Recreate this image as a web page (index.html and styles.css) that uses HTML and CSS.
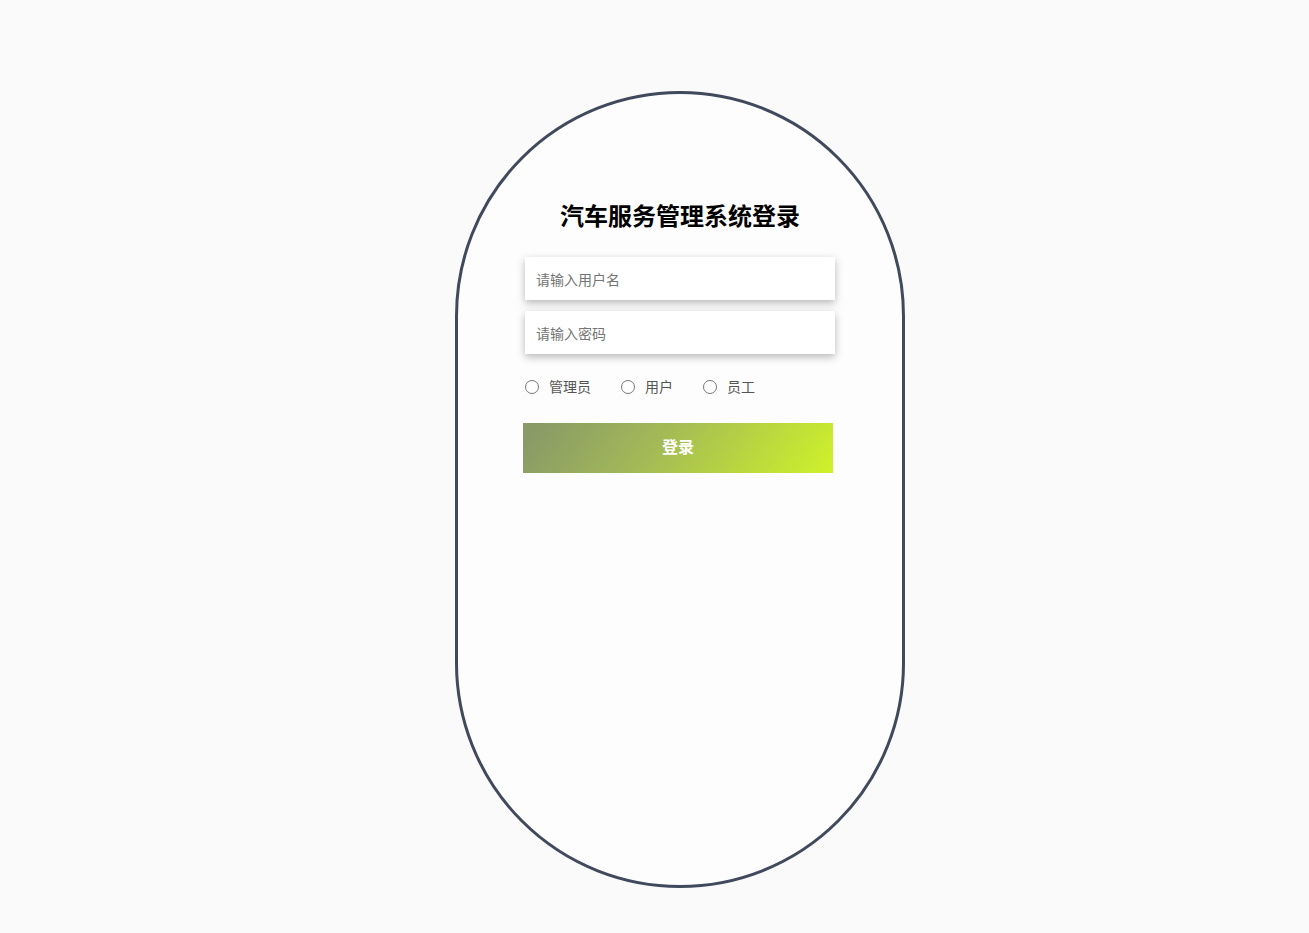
FILE: index.html
```html
<!DOCTYPE html>
<html lang="zh-CN">
<head>
<meta charset="utf-8">
<title>汽车服务管理系统登录</title>
<link rel="stylesheet" href="styles.css">
</head>
<body>
<div class="page">
  <div class="card">
    <h1 class="title">汽车服务管理系统登录</h1>
    <form class="form">
      <input class="field" type="text" placeholder="请输入用户名">
      <input class="field" type="password" placeholder="请输入密码">
      <div class="roles">
        <label class="role"><input type="radio" name="role" class="radio"><span>管理员</span></label>
        <label class="role"><input type="radio" name="role" class="radio"><span>用户</span></label>
        <label class="role"><input type="radio" name="role" class="radio"><span>员工</span></label>
      </div>
      <button type="button" class="submit">登录</button>
    </form>
  </div>
</div>
</body>
</html>
```
FILE: styles.css
```css
html, body {
  margin: 0;
  padding: 0;
  background: #fafafa;
  font-family: "Noto Sans CJK SC", "Noto Sans", sans-serif;
}
.page {
  width: 1309px;
  height: 933px;
  display: flex;
  justify-content: flex-start;
  padding-top: 91px;
  padding-left: 455px;
  box-sizing: border-box;
}
.card {
  width: 450px;
  height: 797px;
  box-sizing: border-box;
  border: 3px solid #404a5c;
  border-radius: 225px;
  background: #fdfdfd;
  display: flex;
  flex-direction: column;
  align-items: center;
  padding-top: 105px;
}
.title {
  margin: 0;
  font-size: 24px;
  line-height: 32px;
  font-weight: 700;
  color: #000;
  letter-spacing: 0;
}
.form {
  width: 310px;
  margin-top: 26px;
  display: flex;
  flex-direction: column;
}
.field {
  width: 310px;
  height: 43px;
  box-sizing: border-box;
  border: none;
  outline: none;
  background: #fff;
  box-shadow: 0 3px 8px rgba(0, 0, 0, 0.28);
  padding: 0 11px;
  font-family: inherit;
  font-size: 14px;
  color: #333;
}
.field + .field {
  margin-top: 11px;
}
.field::placeholder {
  color: #757575;
}
.roles {
  display: flex;
  align-items: center;
  gap: 30px;
  margin-top: 22px;
  height: 20px;
}
.role {
  display: flex;
  align-items: center;
  gap: 10px;
  font-size: 14px;
  line-height: 20px;
  color: #555;
}
.role span {
  margin-top: -1px;
}
.radio {
  appearance: none;
  -webkit-appearance: none;
  margin: 1px 0 0 0;
  width: 14px;
  height: 14px;
  border: 1px solid #767676;
  border-radius: 50%;
  box-sizing: border-box;
  background: #fff;
}
.submit {
  margin-top: 27px;
  margin-left: -2px;
  width: 310px;
  height: 50px;
  padding: 0 0 4px 0;
  border: none;
  background: linear-gradient(125deg, #899a67 4%, #a3b957 42%, #cff22a 100%);
  color: #fff;
  font-family: inherit;
  font-size: 16px;
  font-weight: 700;
  cursor: pointer;
}
```
